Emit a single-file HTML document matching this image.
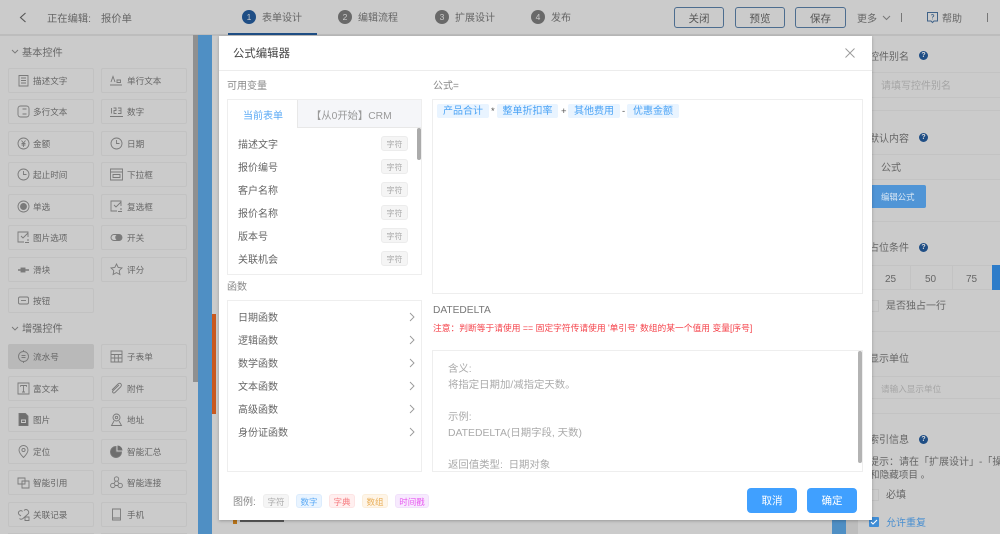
<!DOCTYPE html>
<html lang="zh">
<head>
<meta charset="utf-8">
<title>公式编辑器</title>
<style>
html,body{margin:0;padding:0;width:1000px;height:534px;overflow:hidden;background:#cbcbcb}
body{font-family:"Liberation Sans","Noto Sans CJK SC",sans-serif;position:relative;color:#555}
#w{position:absolute;left:0;top:0;width:1000px;height:534px;overflow:hidden;filter:blur(.35px)}
.a,.c,.l,.b,.t,.s,.r,.f,.g{position:absolute;white-space:nowrap}
.c{width:84px;height:23px;border:1px solid #c2c2c2;border-radius:2px;font-size:8.6px;line-height:24px;text-indent:24px;color:#666}
.c svg{position:absolute;left:8px;top:5px;width:13px;height:13px;fill:none;stroke:#7a7a7a;stroke-width:.9}
.l{background:#c3c3c3;height:1px}
.b{top:7px;width:48px;height:19px;border:1px solid #4d6d8f;border-radius:3px;font-size:10.5px;line-height:22px;text-align:center;color:#555}
.s{top:10px;width:14px;height:14px;border-radius:50%;background:#696969;color:#ccc;font-size:8.5px;line-height:14px;text-align:center}
.t{top:10px;font-size:10px;line-height:18px;color:#656565}
.h{position:absolute;width:9px;height:9px;border-radius:50%;background:#1f4e85;color:#ddd;font-size:7px;line-height:9px;text-align:center;font-weight:bold}
.r{left:10px;font-size:10px;line-height:18px;color:#666}
.g{left:153px;width:25px;height:13px;border:1px solid #ececec;background:#f5f5f5;border-radius:3px;color:#aaa;font-size:8px;line-height:15px;text-align:center}
.f{left:10px;font-size:10px;line-height:18px;color:#666}
.chev{position:absolute}
.q{position:absolute;top:104px;height:14px;background:#e9f4ff;border-radius:2px;color:#4ba3f5;font-size:10px;line-height:16px;text-align:center}
.o{position:absolute;top:104px;font-size:9.5px;line-height:16px;color:#555}
.e{position:absolute;left:15px;font-size:10.4px;line-height:18px;color:#aaa;white-space:nowrap}
.k{position:absolute;top:494px;height:12px;border-radius:3px;font-size:8.5px;line-height:14px;text-align:center;border:1px solid}
.p{position:absolute;width:50px;height:25px;background:#40a0ff;border-radius:4px;color:#fff;font-size:10.5px;line-height:27px;text-align:center}
.x{position:absolute;font-size:10px;line-height:18px;color:#666;white-space:nowrap}
</style>
</head>
<body>
<div id="w">

<!-- top bar -->
<div class="a" style="left:0;top:34px;width:1000px;height:2px;background:#bdbdbd"></div>
<svg class="a" style="left:19px;top:12px" width="8" height="11" fill="none" stroke="#555" stroke-width="1.1"><path d="M6.500 1L1.500 5.500L6.500 10"/></svg>
<div class="x" style="left:47px;top:11px;font-size:10.3px">正在编辑:</div>
<div class="x" style="left:101px;top:11px;font-size:10.3px">报价单</div>
<div class="s" style="left:242px;background:#1f4e85">1</div><div class="t" style="left:262px">表单设计</div>
<div class="a" style="left:228px;top:33px;width:89px;height:2px;background:#1f4e85"></div>
<div class="s" style="left:338px">2</div><div class="t" style="left:358px">编辑流程</div>
<div class="s" style="left:435px">3</div><div class="t" style="left:455px">扩展设计</div>
<div class="s" style="left:531px">4</div><div class="t" style="left:551px">发布</div>
<div class="b" style="left:674px">关闭</div>
<div class="b" style="left:735px">预览</div>
<div class="b" style="left:795px;width:49px">保存</div>
<div class="x" style="left:857px;top:11px">更多</div>
<svg class="a" style="left:882px;top:15px" width="9" height="6" fill="none" stroke="#777"><path d="M1 1L4.500 4.500L8 1"/></svg>
<div class="a" style="left:901px;top:13px;width:1px;height:9px;background:#777"></div>
<svg class="a" style="left:926px;top:11px" width="13" height="13" fill="none" stroke="#3f6288"><path d="M1.500 1.500h10v8.500H8L6.500 11.500L5 10H1.500z"/><path d="M5.200 4.200q1.300-1.200 2.500 0q.5 1-1.100 1.800v.8M6.500 7.600v.8" stroke-width=".8"/></svg>
<div class="x" style="left:942px;top:11px">帮助</div>
<div class="a" style="left:987px;top:13px;width:1px;height:9px;background:#777"></div>

<!-- left side -->
<svg class="a" style="left:11px;top:49px" width="8" height="6" fill="none" stroke="#777" stroke-width=".9"><path d="M1 1L4 4L7 1"/></svg>
<div class="x" style="left:22px;top:45px;font-size:10.2px">基本控件</div>
<div class="a" style="left:193px;top:35px;width:5px;height:347px;background:#909090"></div>
<div class="a" style="left:198px;top:35px;width:14px;height:499px;background:#4f8fc4"></div>
<div class="a" style="left:212px;top:314px;width:4px;height:100px;background:#c9591f"></div>

<div class="c" style="left:8px;top:68px"><svg viewBox="0 0 13 13"><path d="M2 1.500h9v10.500H2zM4 4h5M4 6.500h5M4 9h5"/></svg>描述文字</div>
<div class="c" style="left:101px;top:68px;text-indent:25px"><svg viewBox="0 0 13 13"><path d="M0 11h12M1 8L3 2.500L5 8M7 6h3.500v2.500H7z"/></svg>单行文本</div>
<div class="c" style="left:8px;top:99px"><svg viewBox="0 0 13 13"><rect x="1" y="1" width="11" height="11" rx="2.500"/><path d="M3.500 4v0M3.500 9v0M5.500 4h4M5.500 9h4"/></svg>多行文本</div>
<div class="c" style="left:101px;top:99px;text-indent:25px"><svg viewBox="0 0 13 13"><path d="M0 11.500h13M1.500 3v5.500M3.500 3h2.500v2.500H4V8.500h2.500M8 3h3v5.500H8M8.500 5.700h2"/></svg>数字</div>
<div class="c" style="left:8px;top:131px"><svg viewBox="0 0 13 13"><circle cx="6.500" cy="6.500" r="5.500"/><path d="M4.500 3.500l2 2.500l2-2.500M6.500 6v4M4.500 6.500h4M4.500 8h4"/></svg>金额</div>
<div class="c" style="left:101px;top:131px;text-indent:25px"><svg viewBox="0 0 13 13"><circle cx="6.500" cy="6.500" r="5.500"/><path d="M6.500 3v3.500h3"/></svg>日期</div>
<div class="c" style="left:8px;top:162px"><svg viewBox="0 0 13 13"><circle cx="6.500" cy="6.500" r="5.500"/><path d="M6.500 3v3.500h3"/></svg>起止时间</div>
<div class="c" style="left:101px;top:162px;text-indent:25px"><svg viewBox="0 0 13 13"><path d="M.5 1h12v11H.5zM.5 4h12M3 6.500h7v3H3z"/></svg>下拉框</div>
<div class="c" style="left:8px;top:194px"><svg viewBox="0 0 13 13"><circle cx="6.500" cy="6.500" r="5.500"/><circle cx="6.500" cy="6.500" r="3" fill="#7a7a7a"/></svg>单选</div>
<div class="c" style="left:101px;top:194px;text-indent:25px"><svg viewBox="0 0 13 13"><path d="M11 6V1H1v10h6M4 5l2 2l5-5M8 11.500h4M10 9h2"/></svg>复选框</div>
<div class="c" style="left:8px;top:225px"><svg viewBox="0 0 13 13"><path d="M11 6V1H1v10h6M4 5l2 2l5-5M8 11.500h4M10 9h2"/></svg>图片选项</div>
<div class="c" style="left:101px;top:225px;text-indent:25px"><svg viewBox="0 0 13 13"><rect x="1" y="3.500" width="11" height="6" rx="3"/><circle cx="8.500" cy="6.500" r="2.800" fill="#7a7a7a"/></svg>开关</div>
<div class="c" style="left:8px;top:257px"><svg viewBox="0 0 13 13"><path d="M1 7h11" stroke-width="1.500"/><rect x="4" y="5" width="4" height="4" fill="#7a7a7a"/></svg>滑块</div>
<div class="c" style="left:101px;top:257px;text-indent:25px"><svg viewBox="0 0 13 13"><path d="M6.500 1l1.700 3.500l3.800.5l-2.800 2.600l.7 3.900l-3.400-1.900l-3.400 1.900l.7-3.900L1 5l3.800-.5z"/></svg>评分</div>
<div class="c" style="left:8px;top:288px"><svg viewBox="0 0 13 13"><rect x="1.500" y="3" width="10" height="7" rx="1.500"/><path d="M4 6.500h5"/></svg>按钮</div>

<svg class="a" style="left:11px;top:326px" width="8" height="6" fill="none" stroke="#777" stroke-width=".9"><path d="M1 1L4 4L7 1"/></svg>
<div class="x" style="left:22px;top:321px;font-size:10.2px">增强控件</div>

<div class="c" style="left:8px;top:344px;background:#b9b9b9;border-color:#b9b9b9"><svg viewBox="0 0 13 13"><circle cx="6.500" cy="6.500" r="5"/><path d="M4.500 5.500h4M4.500 7.500h4M6.500 0v1.500M6.500 11.500V13"/></svg>流水号</div>
<div class="c" style="left:101px;top:344px;text-indent:25px"><svg viewBox="0 0 13 13"><path d="M1 1h11v11H1zM1 4.500h11M1 8h11M4.700 4.500V12M8.300 4.500V12"/></svg>子表单</div>
<div class="c" style="left:8px;top:376px"><svg viewBox="0 0 13 13"><path d="M1 1h11v11H1zM3.500 3.500h6v1.200M6.500 3.500v6.500M5 10h3M3.500 3.500v1.200"/></svg>富文本</div>
<div class="c" style="left:101px;top:376px;text-indent:25px"><svg viewBox="0 0 13 13"><path d="M2 8l6-6q2-1.500 3 0q1 1.500-.5 3L5 10.500q-1.500 1-2.200 0q-.7-1 .4-2L9 3"/></svg>附件</div>
<div class="c" style="left:8px;top:407px"><svg viewBox="0 0 13 13"><path d="M2 0h6l3 3v10H2z" fill="#6e6e6e"/><path d="M4.500 7h4v2.500h-4z" stroke="#ccc"/></svg>图片</div>
<div class="c" style="left:101px;top:407px;text-indent:25px"><svg viewBox="0 0 13 13"><circle cx="6.500" cy="4.500" r="3.500"/><circle cx="6.500" cy="4.500" r="1.200"/><path d="M4 8L1.500 12.500h10L9 8"/></svg>地址</div>
<div class="c" style="left:8px;top:439px"><svg viewBox="0 0 13 13"><path d="M6.500 12.500Q2 8 2 5a4.500 4.500 0 0 1 9 0Q11 8 6.500 12.500z"/><circle cx="6.500" cy="5" r="1.600"/></svg>定位</div>
<div class="c" style="left:101px;top:439px;text-indent:25px"><svg viewBox="0 0 13 13"><path d="M6 1.500A5.500 5.500 0 1 0 11.500 7H6z" fill="#6e6e6e"/><path d="M7.500 0.500A5 5 0 0 1 12.500 5.500H7.500z" fill="#6e6e6e" stroke="none"/></svg>智能汇总</div>
<div class="c" style="left:8px;top:470px"><svg viewBox="0 0 13 13"><path d="M1 2h7v6H1zM5 5h7v7H5z"/></svg>智能引用</div>
<div class="c" style="left:101px;top:470px;text-indent:25px"><svg viewBox="0 0 13 13"><circle cx="6.500" cy="3" r="2.200"/><circle cx="2.800" cy="9.500" r="2.200"/><circle cx="10.200" cy="9.500" r="2.200"/><path d="M5.500 5L4 7.500M7.500 5L9 7.500M5 9.500h3"/></svg>智能连接</div>
<div class="c" style="left:8px;top:502px"><svg viewBox="0 0 13 13"><path d="M4 8L2 6.500q-1.500-2 .5-3.500q2-1 3 .5M7 2.500q2-2 4 0q1.500 2 0 3.500L6 10.500q-2 1.500-3.500 0M8 9h4v3.500H8z"/></svg>关联记录</div>
<div class="c" style="left:101px;top:502px;text-indent:25px"><svg viewBox="0 0 13 13"><path d="M2.500 1h8v11h-8zM2.500 10h8"/></svg>手机</div>
<div class="a" style="left:8px;top:533px;width:86px;height:1px;background:#c2c2c2"></div>
<div class="a" style="left:101px;top:533px;width:86px;height:1px;background:#c2c2c2"></div>

<!-- behind-modal leftovers -->
<div class="a" style="left:233px;top:520px;width:4px;height:4px;background:#b8741a"></div>
<div class="a" style="left:240px;top:520px;width:44px;height:2px;background:#5a5a5a"></div>
<div class="a" style="left:832px;top:520px;width:14px;height:14px;background:#4f8fc4"></div>
<div class="a" style="left:846px;top:520px;width:12px;height:14px;background:#bdbdbd"></div>

<!-- right panel -->
<div class="x" style="left:869px;top:49px">控件别名</div>
<div class="h" style="left:919px;top:51px">?</div>
<div class="l" style="left:872px;top:72px;width:128px"></div>
<div class="x" style="left:881px;top:78px;color:#a5a5a5">请填写控件别名</div>
<div class="l" style="left:872px;top:97px;width:128px"></div>
<div class="l" style="left:872px;top:110px;width:128px"></div>
<div class="x" style="left:869px;top:131px">默认内容</div>
<div class="h" style="left:919px;top:133px">?</div>
<div class="l" style="left:872px;top:154px;width:128px"></div>
<div class="x" style="left:881px;top:160px">公式</div>
<div class="l" style="left:872px;top:179px;width:128px"></div>
<div class="a" style="left:860px;top:185px;width:66px;height:23px;background:#5095d6;border-radius:2px;color:#dce9f5;font-size:8.400px;line-height:25px;text-indent:21px">编辑公式</div>
<div class="l" style="left:872px;top:221px;width:128px"></div>
<div class="x" style="left:869px;top:240px">占位条件</div>
<div class="h" style="left:919px;top:243px">?</div>
<div class="a" style="left:872px;top:265px;width:128px;height:25px;border-top:1px solid #c3c3c3;border-bottom:1px solid #c3c3c3;box-sizing:border-box"></div>
<div class="a" style="left:910px;top:265px;width:1px;height:25px;background:#c3c3c3"></div>
<div class="a" style="left:952px;top:265px;width:1px;height:25px;background:#c3c3c3"></div>
<div class="a" style="left:992px;top:265px;width:8px;height:25px;background:#2d7cc9"></div>
<div class="x" style="left:885px;top:271px">25</div>
<div class="x" style="left:925px;top:271px">50</div>
<div class="x" style="left:966px;top:271px">75</div>
<div class="a" style="left:871px;top:300px;width:7px;height:10px;border:1px solid #c0c0c0;border-left:0"></div>
<div class="x" style="left:886px;top:298px">是否独占一行</div>
<div class="l" style="left:872px;top:331px;width:128px"></div>
<div class="x" style="left:869px;top:351px">显示单位</div>
<div class="l" style="left:872px;top:376px;width:128px"></div>
<div class="x" style="left:881px;top:380px;font-size:8.600px;color:#a5a5a5">请输入显示单位</div>
<div class="l" style="left:872px;top:398px;width:128px"></div>
<div class="l" style="left:872px;top:413px;width:128px"></div>
<div class="x" style="left:869px;top:432px">索引信息</div>
<div class="h" style="left:919px;top:435px">?</div>
<div class="x" style="left:869px;top:454px">提示：请在「扩展设计」-「操</div>
<div class="x" style="left:870px;top:467px;font-size:9.600px">和隐藏项目 。</div>
<div class="a" style="left:871px;top:489px;width:7px;height:10px;border:1px solid #c0c0c0;border-left:0"></div>
<div class="x" style="left:886px;top:487px">必填</div>
<div class="a" style="left:869px;top:517px;width:10px;height:10px;background:#3f8dd6;border-radius:1px"></div>
<svg class="a" style="left:869px;top:517px" width="10" height="10" fill="none" stroke="#fff" stroke-width="1.100"><path d="M2 5l2 2l4-4"/></svg>
<div class="x" style="left:886px;top:515px;color:#4a8fd0">允许重复</div>

<!-- modal -->
<div class="a" style="left:219px;top:36px;width:653px;height:484px;background:#fff;box-shadow:0 1px 3px rgba(0,0,0,.25)">
  <div class="a" style="left:14px;top:9px;font-size:11.400px;line-height:18px;color:#444">公式编辑器</div>
  <svg class="a" style="left:626px;top:12px" width="10" height="10" fill="none" stroke="#999" stroke-width=".9"><path d="M.5.5l9 9M9.500.5l-9 9"/></svg>
  <div class="a" style="left:0;top:34px;width:653px;height:1px;background:#ececec"></div>
  <div class="x" style="left:8px;top:42px;color:#888">可用变量</div>
  <div class="x" style="left:214px;top:42px;color:#888">公式=</div>

  <!-- variables -->
  <div class="a" style="left:8px;top:63px;width:193px;height:174px;border:1px solid #eeeeee;overflow:hidden">
    <div class="a" style="left:69px;top:0;width:124px;height:28px;background:#f5f6f9;border-left:1px solid #e8e8e8;border-bottom:1px solid #e8e8e8;box-sizing:border-box"></div>
    <div class="x" style="left:15px;top:8px;color:#5aa9f5">当前表单</div>
    <div class="x" style="left:83px;top:8px;font-size:10.300px;color:#999">【从0开始】CRM</div>
    <div class="r" style="top:37px">描述文字</div><div class="g" style="top:36px">字符</div>
    <div class="r" style="top:60px">报价编号</div><div class="g" style="top:59px">字符</div>
    <div class="r" style="top:83px">客户名称</div><div class="g" style="top:82px">字符</div>
    <div class="r" style="top:106px">报价名称</div><div class="g" style="top:105px">字符</div>
    <div class="r" style="top:129px">版本号</div><div class="g" style="top:128px">字符</div>
    <div class="r" style="top:152px">关联机会</div><div class="g" style="top:151px">字符</div>
    <div class="a" style="left:189px;top:28px;width:4px;height:32px;background:#ababab;border-radius:2px"></div>
  </div>

  <!-- functions -->
  <div class="x" style="left:8px;top:243px;color:#888">函数</div>
  <div class="a" style="left:8px;top:264px;width:193px;height:170px;border:1px solid #eeeeee">
    <div class="f" style="top:9px">日期函数</div>
    <div class="f" style="top:32px">逻辑函数</div>
    <div class="f" style="top:55px">数学函数</div>
    <div class="f" style="top:78px">文本函数</div>
    <div class="f" style="top:101px">高级函数</div>
    <div class="f" style="top:124px">身份证函数</div>
    <svg class="chev" style="left:181px;top:11px" width="6" height="10" fill="none" stroke="#999" stroke-width=".9"><path d="M1 1l4 4l-4 4"/></svg>
    <svg class="chev" style="left:181px;top:34px" width="6" height="10" fill="none" stroke="#999" stroke-width=".9"><path d="M1 1l4 4l-4 4"/></svg>
    <svg class="chev" style="left:181px;top:57px" width="6" height="10" fill="none" stroke="#999" stroke-width=".9"><path d="M1 1l4 4l-4 4"/></svg>
    <svg class="chev" style="left:181px;top:80px" width="6" height="10" fill="none" stroke="#999" stroke-width=".9"><path d="M1 1l4 4l-4 4"/></svg>
    <svg class="chev" style="left:181px;top:103px" width="6" height="10" fill="none" stroke="#999" stroke-width=".9"><path d="M1 1l4 4l-4 4"/></svg>
    <svg class="chev" style="left:181px;top:126px" width="6" height="10" fill="none" stroke="#999" stroke-width=".9"><path d="M1 1l4 4l-4 4"/></svg>
  </div>

  <!-- formula box -->
  <div class="a" style="left:213px;top:63px;width:429px;height:193px;border:1px solid #eeeeee"></div>
  <div class="a" style="left:214px;top:266px;font-size:10.200px;line-height:18px;color:#777">DATEDELTA</div>
  <div class="a" style="left:214px;top:286px;font-size:8.750px;line-height:12px;color:#f5434b">注意：判断等于请使用 == 固定字符传请使用 '单引号' 数组的某一个值用 变量[序号]</div>
  <div class="a" style="left:213px;top:314px;width:429px;height:120px;border:1px solid #eeeeee;overflow:hidden">
    <div class="e" style="top:10px">含义:</div>
    <div class="e" style="top:26px">将指定日期加/减指定天数。</div>
    <div class="e" style="top:58px">示例:</div>
    <div class="e" style="top:74px">DATEDELTA(日期字段, 天数)</div>
    <div class="e" style="top:106px">返回值类型:&nbsp; 日期对象</div>
    <div class="a" style="left:425px;top:0;width:4px;height:112px;background:#b3b3b3;border-radius:2px"></div>
  </div>

  <!-- legend -->
  <div class="x" style="left:14px;top:458px;color:#888">图例:</div>
  <div class="p" style="left:528px;top:452px">取消</div>
  <div class="p" style="left:588px;top:452px">确定</div>
</div>

<!-- formula tags -->
<div class="q" style="left:437px;width:52px">产品合计</div><div class="o" style="left:491px">*</div>
<div class="q" style="left:497px;width:61px">整单折扣率</div><div class="o" style="left:561px">+</div>
<div class="q" style="left:568px;width:52px">其他费用</div><div class="o" style="left:622px">-</div>
<div class="q" style="left:627px;width:52px">优惠金额</div>

<!-- legend tags -->
<div class="k" style="left:263px;width:24px;background:#f5f5f5;border-color:#eee;color:#aaa">字符</div>
<div class="k" style="left:296px;width:24px;background:#e9f4ff;border-color:#dcecfd;color:#5aa9f5">数字</div>
<div class="k" style="left:329px;width:24px;background:#ffefef;border-color:#fde4e4;color:#f67c80">字典</div>
<div class="k" style="left:362px;width:24px;background:#fef5e8;border-color:#fbeeda;color:#e9ae58">数组</div>
<div class="k" style="left:395px;width:32px;background:#f7eafe;border-color:#f1e1fb;color:#e85af0">时间戳</div>

</div>
</body>
</html>
